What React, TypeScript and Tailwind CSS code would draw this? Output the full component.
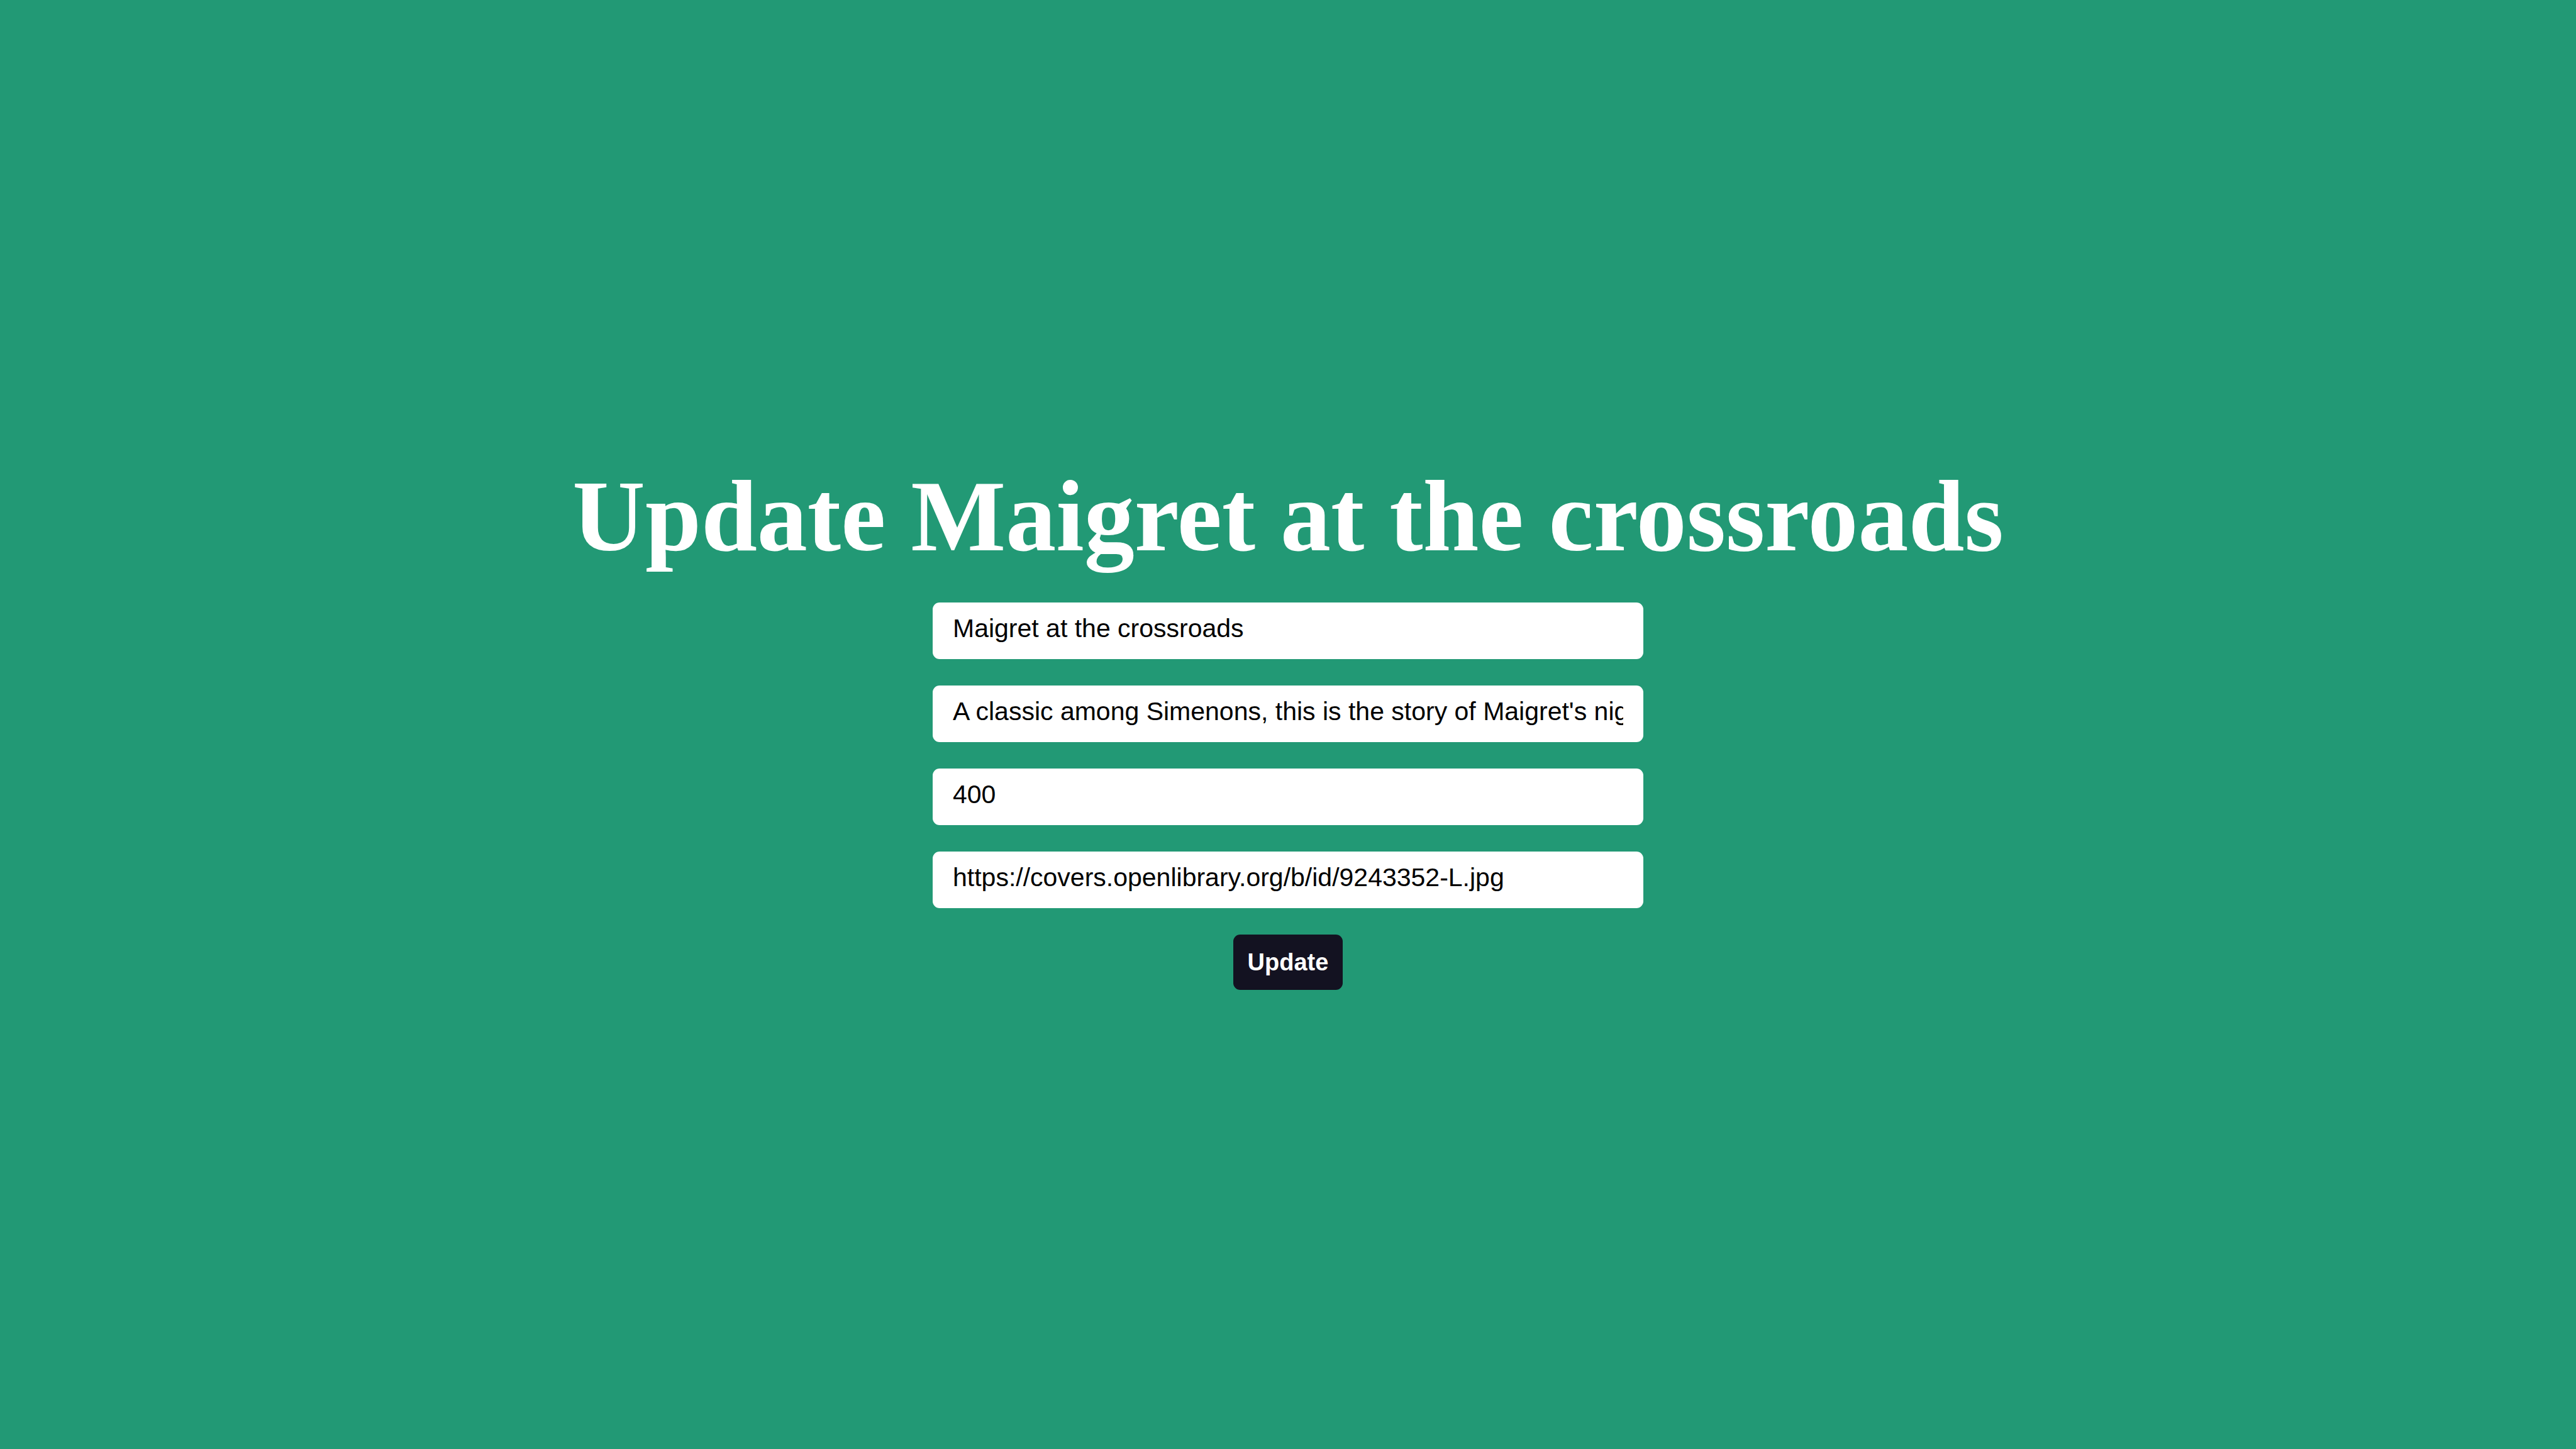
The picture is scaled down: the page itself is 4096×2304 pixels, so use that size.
import { useState, type FormEvent } from "react";

type Book = {
  title: string;
  desc: string;
  price: string;
  cover: string;
};

const initialBook: Book = {
  title: "Maigret at the crossroads",
  desc: "A classic among Simenons, this is the story of Maigret's night at the crossroads",
  price: "400",
  cover: "https://covers.openlibrary.org/b/id/9243352-L.jpg",
};

const fields: { name: keyof Book; label: string }[] = [
  { name: "title", label: "Title" },
  { name: "desc", label: "Description" },
  { name: "price", label: "Price" },
  { name: "cover", label: "Cover" },
];

export default function App() {
  const [book, setBook] = useState<Book>(initialBook);

  const handleSubmit = (event: FormEvent) => event.preventDefault();

  return (
    <main className="flex min-h-screen flex-col items-center justify-center gap-[46px] bg-[#229975]">
      <h1 className="text-center font-['Liberation_Serif',serif] text-[160px] leading-[182px] font-bold text-white">
        Update {initialBook.title}
      </h1>
      <form
        onSubmit={handleSubmit}
        className="flex w-full max-w-[1130px] flex-col items-center gap-[42px] font-['Liberation_Sans',sans-serif]"
      >
        {fields.map(({ name, label }) => (
          <input
            key={name}
            type="text"
            name={name}
            aria-label={label}
            value={book[name]}
            onChange={(event) => setBook({ ...book, [name]: event.target.value })}
            className="w-full rounded-[11px] bg-white px-8 pt-[18px] pb-[26px] text-[41px] leading-[46px] text-black outline-none"
          />
        ))}
        <button
          type="submit"
          className="cursor-pointer rounded-[11px] bg-[#131221] px-[23px] py-[22px] text-[38px] leading-[44px] font-bold text-white"
        >
          Update
        </button>
      </form>
    </main>
  );
}
